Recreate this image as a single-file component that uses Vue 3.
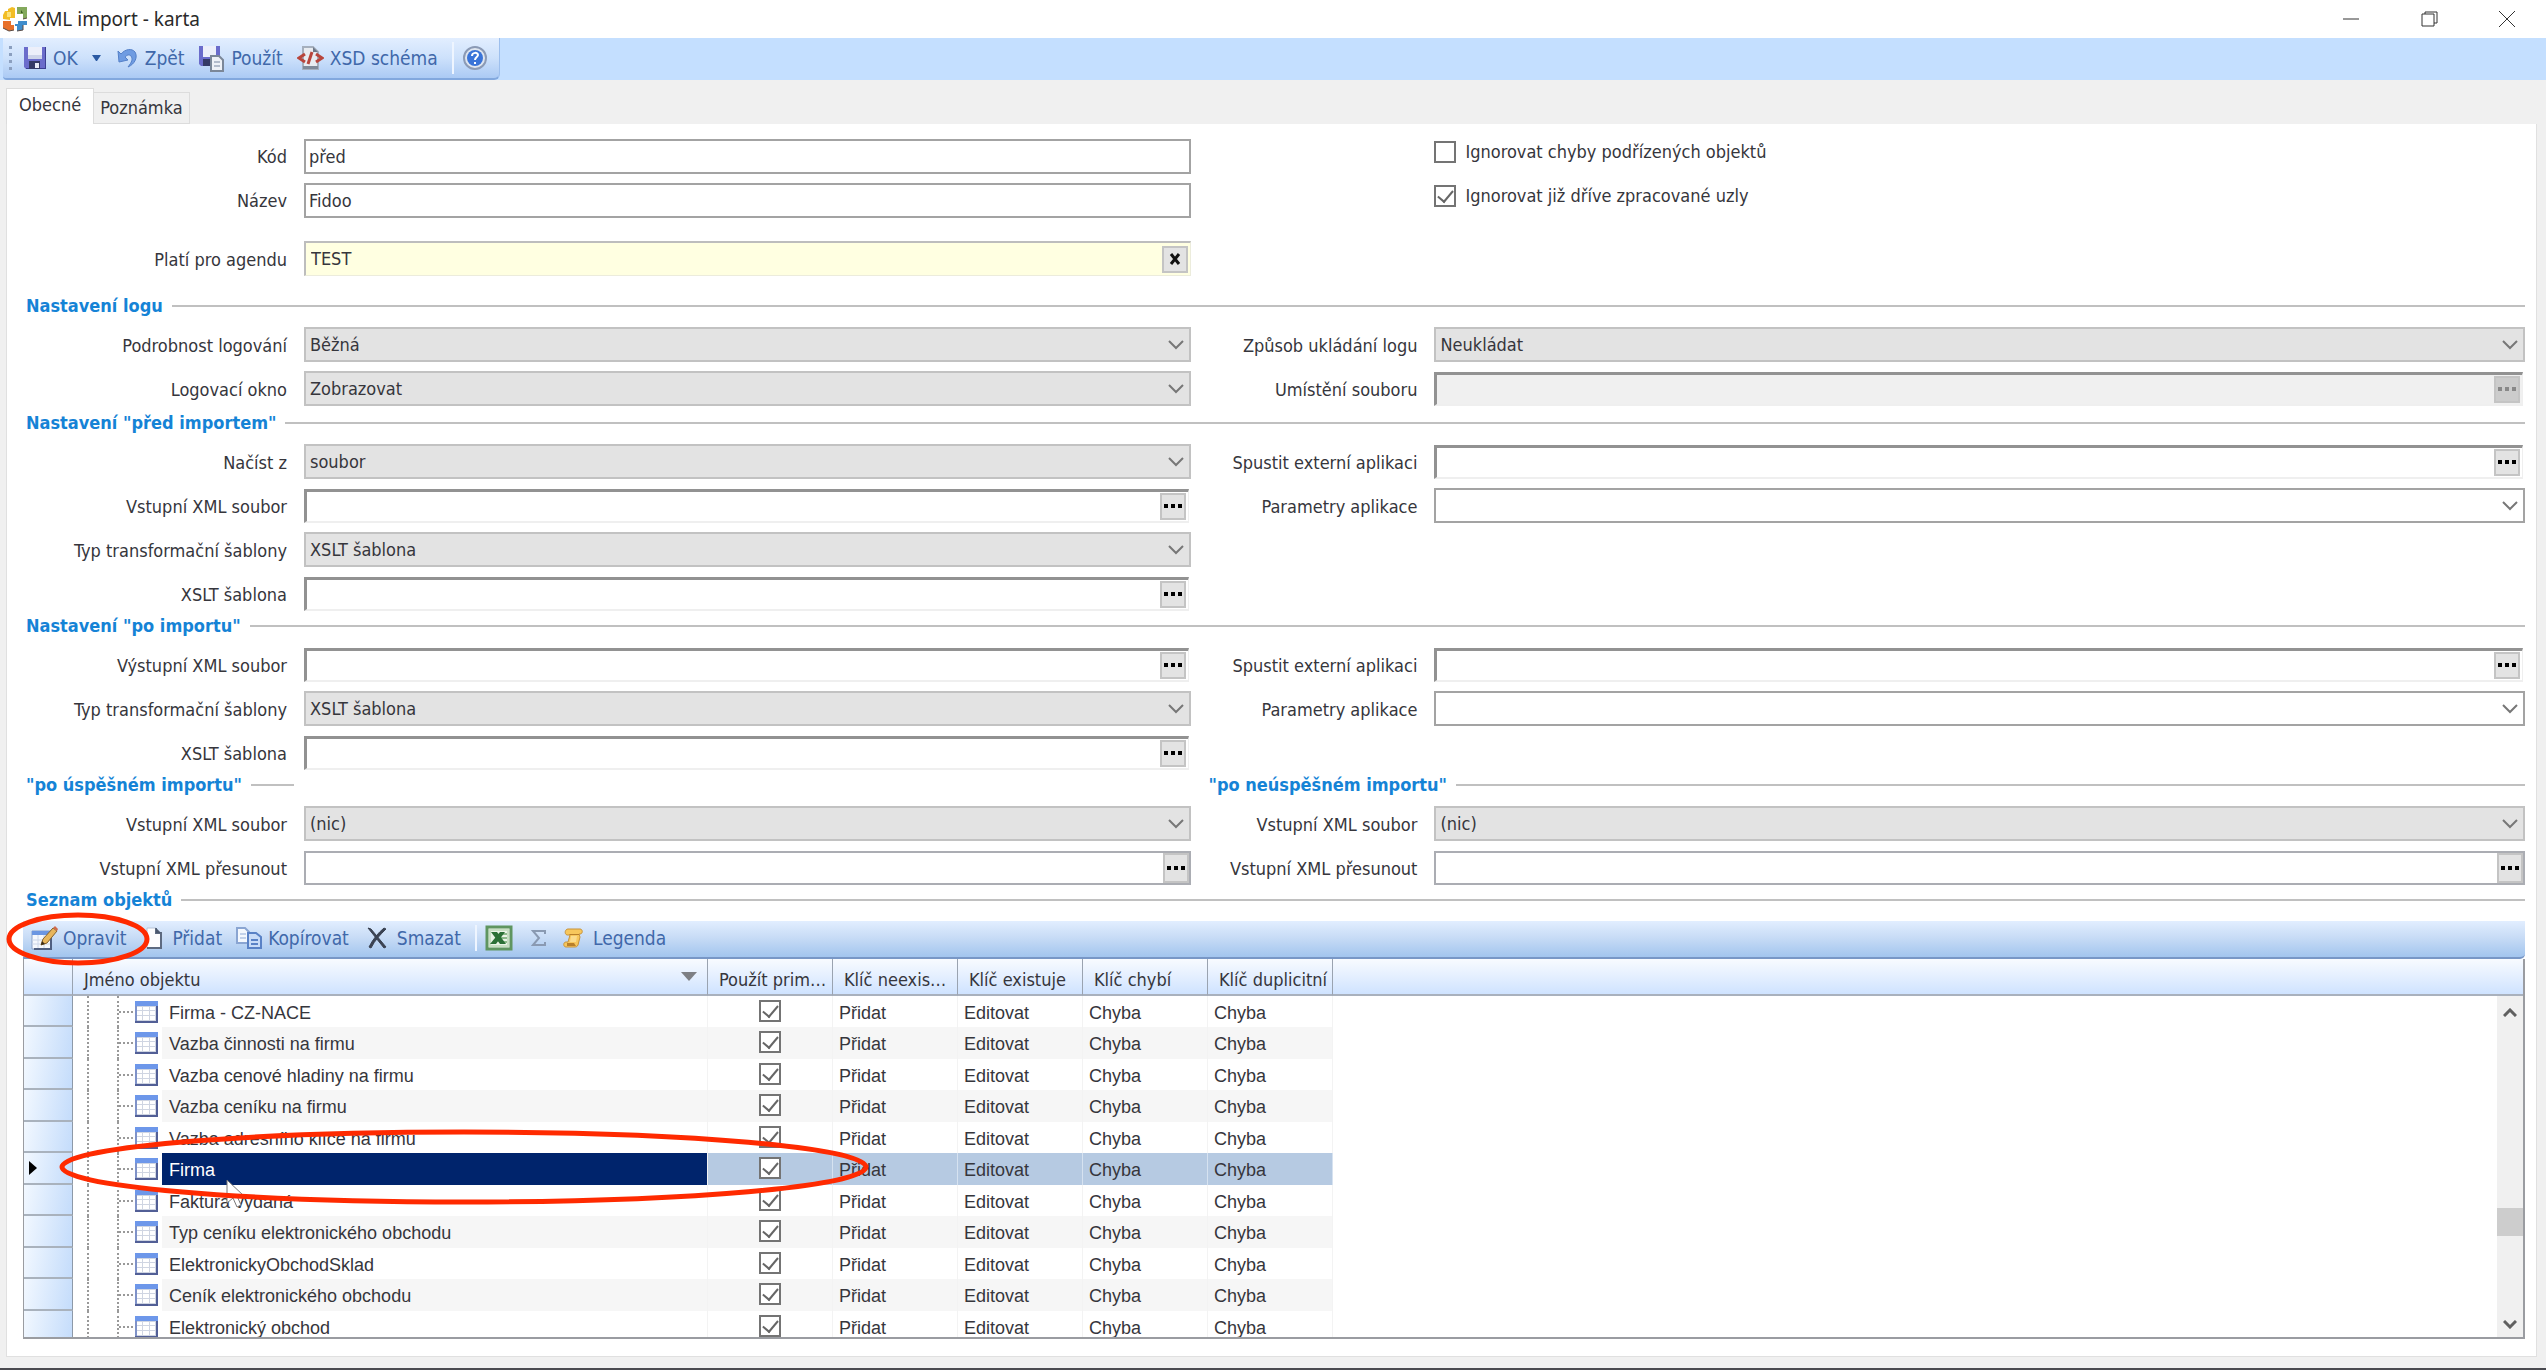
<script setup>
import { ref } from 'vue'

const kod = ref('před')
const nazev = ref('Fidoo')
const agenda = ref('TEST')
const ignoreChildren = ref(false)
const ignoreProcessed = ref(true)

const logRows = [
  [
    { id: 'log-detail', label: 'Podrobnost logování', kind: 'select', value: 'Běžná' },
    { id: 'log-save', label: 'Způsob ukládání logu', kind: 'select', value: 'Neukládat' },
  ],
  [
    { id: 'log-window', label: 'Logovací okno', kind: 'select', value: 'Zobrazovat' },
    { id: 'log-path', label: 'Umístění souboru', kind: 'browse', disabled: true },
  ],
]
const beforeRows = [
  [
    { id: 'load-from', label: 'Načíst z', kind: 'select', value: 'soubor' },
    { id: 'pre-app', label: 'Spustit externí aplikaci', kind: 'browse' },
  ],
  [
    { id: 'in-xml', label: 'Vstupní XML soubor', kind: 'browse' },
    { id: 'pre-params', label: 'Parametry aplikace', kind: 'combo', value: '' },
  ],
  [{ id: 'pre-type', label: 'Typ transformační šablony', kind: 'select', value: 'XSLT šablona' }],
  [{ id: 'pre-xslt', label: 'XSLT šablona', kind: 'browse' }],
]
const afterRows = [
  [
    { id: 'out-xml', label: 'Výstupní XML soubor', kind: 'browse' },
    { id: 'post-app', label: 'Spustit externí aplikaci', kind: 'browse' },
  ],
  [
    { id: 'post-type', label: 'Typ transformační šablony', kind: 'select', value: 'XSLT šablona' },
    { id: 'post-params', label: 'Parametry aplikace', kind: 'combo', value: '' },
  ],
  [{ id: 'post-xslt', label: 'XSLT šablona', kind: 'browse' }],
]
const resultRows = [
  [
    { id: 'ok-file', label: 'Vstupní XML soubor', kind: 'select', value: '(nic)' },
    { id: 'err-file', label: 'Vstupní XML soubor', kind: 'select', value: '(nic)' },
  ],
  [
    { id: 'ok-move', label: 'Vstupní XML přesunout', kind: 'path' },
    { id: 'err-move', label: 'Vstupní XML přesunout', kind: 'path' },
  ],
]
const sections = [
  { titles: ['Nastavení logu'], rows: logRows, cls: 'after-gap' },
  { titles: ['Nastavení "před importem"'], rows: beforeRows, cls: 'spaced' },
  { titles: ['Nastavení "po importu"'], rows: afterRows, cls: '' },
  { titles: ['"po úspěšném importu"', '"po neúspěšném importu"'], rows: resultRows, cls: '' },
]

const columns = ['Použít prim…', 'Klíč neexis…', 'Klíč existuje', 'Klíč chybí', 'Klíč duplicitní']
const objects = ref(
  [
    'Firma - CZ-NACE',
    'Vazba činnosti na firmu',
    'Vazba cenové hladiny na firmu',
    'Vazba ceníku na firmu',
    'Vazba adresního klíče na firmu',
    'Firma',
    'Faktura vydaná',
    'Typ ceníku elektronického obchodu',
    'ElektronickyObchodSklad',
    'Ceník elektronického obchodu',
    'Elektronický obchod',
  ].map((name) => ({ name, primary: true, values: ['Přidat', 'Editovat', 'Chyba', 'Chyba'] }))
)
const selected = ref(5)
</script>

<template>
  <div class="window">
    <header class="titlebar">
      <svg class="logo" width="26" height="26" viewBox="0 0 26 26" aria-hidden="true">
        <path d="M3 5h3V3l4-2 3 1v10H8v2L1 13V9z" fill="#f2bd25" />
        <path d="M5 6h4v5H5z" fill="#fbe27a" />
        <path d="M15 1h10v11l-4 1V8h-6z" fill="#84a95c" />
        <path d="M19 4l2 3h-2z" fill="#3c5a25" />
        <path d="M1 15h8v4h3v5l-5 1-6-3z" fill="#e8702a" />
        <path d="M16 15h9v4h-4v5l-6 1v-5h-2v-2h3z" fill="#3f8dcc" />
        <path d="M1 22l6 3 5-1M15 25l6-1v-5M21 13l4-1" fill="none" stroke="#5a4a44" />
      </svg>
      <h1>XML import - karta</h1>
      <div class="win-buttons">
        <button type="button" aria-label="Minimalizovat">
          <svg width="18" height="18" viewBox="0 0 18 18"><path d="M1 9h16" /></svg>
        </button>
        <button type="button" aria-label="Obnovit">
          <svg width="18" height="18" viewBox="0 0 18 18"><path d="M2 4h12v12H2zM5 4V2h12v11h-3" /></svg>
        </button>
        <button type="button" aria-label="Zavřít">
          <svg width="18" height="18" viewBox="0 0 18 18"><path d="M1 1l16 16M17 1L1 17" /></svg>
        </button>
      </div>
    </header>

    <div class="ribbon">
      <div class="toolbar" role="toolbar">
        <span class="grip"></span>
        <button type="button" class="tool t-ok">
          <svg width="24" height="24" viewBox="0 0 24 24">
            <path d="M1 1h22v22H3l-2-2z" fill="#6a6ccb" />
            <path d="M22 1h1v22H3v-1h19z" fill="#3b3f92" />
            <path d="M5 1h14v12H5z" fill="#eceffa" />
            <path d="M5 9h14v4H5z" fill="#cdd4ea" />
            <path d="M6 15h11v8H6z" fill="#343a66" />
            <path d="M12 17h4v5h-4z" fill="#e8ecf8" />
          </svg>
          <span>OK</span>
        </button>
        <button type="button" class="tool t-more" aria-label="Další možnosti">
          <svg width="9" height="6" viewBox="0 0 9 6"><path d="M0 0h9L5 6H4z" fill="#2b5aa3" /></svg>
        </button>
        <button type="button" class="tool t-back">
          <svg width="20" height="20" viewBox="0 0 20 20">
            <path d="M1 3l3 3C8 1 15 0 18 4c3 5 0 12-7 15 4-5 5-8 3-11-2-2-4-1-6 1l3 3-9 2z" fill="#6f9ce2" stroke="#5480c8" />
          </svg>
          <span>Zpět</span>
        </button>
        <button type="button" class="tool t-apply">
          <svg width="27" height="27" viewBox="0 0 27 27">
            <path d="M1 1h21v20H3l-2-2z" fill="#6a6ccb" />
            <path d="M5 1h13v11H5z" fill="#eceffa" />
            <path d="M5 14h8v7H5z" fill="#343a66" />
            <path d="M13 11h8l4 4v11H13z" fill="#eef1f6" stroke="#7b8798" stroke-width="2" />
            <path d="M16 17h6M16 21h6" stroke="#b3bccb" stroke-width="2" />
          </svg>
          <span>Použít</span>
        </button>
        <button type="button" class="tool t-xsd">
          <svg width="27" height="24" viewBox="0 0 27 24">
            <path d="M6 1h10l5 5v17H6z" fill="#e8ecf1" stroke="#a5afbd" stroke-width="2" />
            <path d="M6 20h15v3H6z" fill="#7f8a99" />
            <path d="M16 1v5h5z" fill="#6d7888" />
            <path d="M8 8l-6 4 6 4M19 8l6 4-6 4M15 6l-4 12" fill="none" stroke="#b8463c" stroke-width="3" />
          </svg>
          <span>XSD schéma</span>
        </button>
        <span class="divider"></span>
        <button type="button" class="tool t-help" aria-label="Nápověda">
          <svg width="26" height="26" viewBox="0 0 26 26">
            <circle cx="13" cy="13" r="11" fill="#dfe6f0" stroke="#8b9ab5" stroke-width="2" />
            <circle cx="13" cy="13" r="8" fill="#3a74d8" />
            <path d="M10 11c0-4 6-4 6-1 0 2-3 2-3 5M13 17v2" fill="none" stroke="#fff" stroke-width="2" />
          </svg>
        </button>
      </div>
    </div>

    <div class="tabs" role="tablist">
      <button type="button" role="tab" class="tab active" aria-selected="true">Obecné</button>
      <button type="button" role="tab" class="tab" aria-selected="false">Poznámka</button>
    </div>

    <main class="panel">
      <form class="form" @submit.prevent>
        <div class="row">
          <label for="kod">Kód</label>
          <input id="kod" v-model="kod" class="text" type="text" />
          <label class="check wide">
            <input v-model="ignoreChildren" type="checkbox" class="box" />
            <span>Ignorovat chyby podřízených objektů</span>
          </label>
        </div>
        <div class="row">
          <label for="nazev">Název</label>
          <input id="nazev" v-model="nazev" class="text" type="text" />
          <label class="check wide">
            <input v-model="ignoreProcessed" type="checkbox" class="box" />
            <span>Ignorovat již dříve zpracované uzly</span>
          </label>
        </div>
        <div class="row after-gap">
          <label for="agenda">Platí pro agendu</label>
          <div class="lookup">
            <input id="agenda" v-model="agenda" type="text" />
            <button type="button" aria-label="Vymazat">
              <svg width="12" height="12" viewBox="0 0 12 12">
                <path d="M2 1l8 10M10 1L2 11" stroke="#111" stroke-width="3" />
              </svg>
            </button>
          </div>
        </div>

        <section v-for="s in sections" :key="s.titles[0]" :class="s.cls">
          <div class="heading" :class="{ split: s.titles.length > 1 }">
            <h2 v-for="t in s.titles" :key="t">{{ t }}</h2>
          </div>
          <div v-for="(row, i) in s.rows" :key="i" class="row">
            <template v-for="f in row" :key="f.id">
              <label :for="f.id">{{ f.label }}</label>
              <div v-if="f.kind === 'select' || f.kind === 'combo'" class="drop" :class="f.kind">
                <select :id="f.id"><option>{{ f.value }}</option></select>
                <svg width="16" height="10" viewBox="0 0 16 10" aria-hidden="true">
                  <path d="M1 1l7 7 7-7" fill="none" stroke="#777" stroke-width="2" />
                </svg>
              </div>
              <div v-else class="file" :class="[f.kind, { off: f.disabled }]">
                <input :id="f.id" type="text" :disabled="f.disabled" />
                <button type="button" :disabled="f.disabled" aria-label="Procházet">
                  <svg width="18" height="4" viewBox="0 0 18 4"><path d="M0 0h4v4H0zM7 0h4v4H7zM14 0h4v4h-4z" /></svg>
                </button>
              </div>
            </template>
          </div>
        </section>

        <div class="heading"><h2>Seznam objektů</h2></div>
      </form>

      <div class="list">
        <div class="list-bar" role="toolbar">
          <button type="button" class="tool l-edit">
            <svg width="28" height="26" viewBox="0 0 28 26">
              <path d="M1 6h19v18H1z" fill="#f5f8fd" stroke="#8aa0c6" />
              <path d="M1 6h19v4H1z" fill="#6b96e2" />
              <path d="M1 15h19M1 19h19M7 10v14M13 10v14" stroke="#ccd6e8" />
              <path d="M3 24h17V13" fill="none" stroke="#4f5f80" stroke-width="2" />
              <path d="M10 20l2-6L22 3l4 3-10 12z" fill="#e8b65c" stroke="#86622c" />
              <path d="M10 20l1-4 3 3z" fill="#3a2c18" />
              <path d="M22 3l4 3 1-2-3-3z" fill="#cf6a4e" />
            </svg>
            <span>Opravit</span>
          </button>
          <button type="button" class="tool l-add">
            <svg width="16" height="22" viewBox="0 0 16 22">
              <path d="M1 1h9l5 5v15H1z" fill="#fdfdfe" stroke="#b9c4d6" />
              <path d="M10 1v5h5v15H1" fill="none" stroke="#5d6a80" stroke-width="2" />
              <path d="M10 1l5 5h-5z" fill="#4b586e" />
            </svg>
            <span>Přidat</span>
          </button>
          <button type="button" class="tool l-copy">
            <svg width="26" height="22" viewBox="0 0 26 22">
              <path d="M1 1h8l4 4v11H1z" fill="#f4f8fe" stroke="#8aa5d2" stroke-width="2" />
              <path d="M4 7h6M4 11h6" stroke="#c3d2ea" stroke-width="2" />
              <path d="M12 6h8l5 4v11H12z" fill="#c9dcf8" stroke="#5a82c6" stroke-width="2" />
              <path d="M15 13h7M15 17h7" stroke="#5a82c6" stroke-width="2" />
            </svg>
            <span>Kopírovat</span>
          </button>
          <button type="button" class="tool l-del">
            <svg width="20" height="22" viewBox="0 0 20 22">
              <path d="M1 1l3 1 15 18-2 1zM17 1l2 1C13 8 8 13 4 21l-2-1C6 12 11 6 17 1z" fill="#3a4252" stroke="#3a4252" />
            </svg>
            <span>Smazat</span>
          </button>
          <span class="divider"></span>
          <button type="button" class="tool l-excel" aria-label="Excel">
            <svg width="28" height="26" viewBox="0 0 28 26">
              <path d="M2 2h24v22H2z" fill="#eaf3e6" stroke="#5f9560" stroke-width="3" />
              <path d="M5 5h18v16H5z" fill="none" stroke="#c7dec2" stroke-width="2" />
              <path d="M15 9h7M15 13h7M15 17h7" stroke="#8dba8a" stroke-width="2" />
              <path d="M6 7h6l9 12h-6z" fill="#2c7036" />
              <path d="M20 7h-5L5 19h6z" fill="#2c7036" />
            </svg>
          </button>
          <button type="button" class="tool l-sum" aria-label="Součet">
            <svg width="16" height="18" viewBox="0 0 16 18">
              <path d="M14 5V2H2l6 7-6 7h12v-3" fill="none" stroke="#8a9ab2" stroke-width="2" />
            </svg>
          </button>
          <button type="button" class="tool l-legend">
            <svg width="20" height="20" viewBox="0 0 20 20">
              <path d="M5 1h12c3 0 3 5 0 5h-1l1 3-2 8c-1 2-2 2-4 2H3c-3 0-3-5 0-5h2l2-7H4C1 6 2 1 5 1z" fill="#f7c75c" stroke="#c8933a" />
              <path d="M6 6h10v1H7zM4 15h7l2 3H4z" fill="#b87f2a" />
              <path d="M8 8h6l-1 6H7z" fill="#fbdc8c" />
            </svg>
            <span>Legenda</span>
          </button>
        </div>

        <div class="grid">
          <table>
            <colgroup>
              <col class="c-mark" />
              <col class="c-name" />
              <col v-for="c in columns" :key="c" class="c-val" />
              <col />
            </colgroup>
            <thead>
              <tr>
                <th></th>
                <th>
                  <div class="sorted">
                    <span>Jméno objektu</span>
                    <svg width="16" height="9" viewBox="0 0 16 9"><path d="M0 0h16L8 9z" fill="#7d7f84" /></svg>
                  </div>
                </th>
                <th v-for="c in columns" :key="c">{{ c }}</th>
                <th></th>
              </tr>
            </thead>
            <tbody>
              <tr v-for="(o, i) in objects" :key="o.name" :class="{ current: i === selected }" @click="selected = i">
                <td class="mark">
                  <svg v-if="i === selected" width="8" height="14" viewBox="0 0 8 14"><path d="M0 0l8 7-8 7z" /></svg>
                </td>
                <td class="name">
                  <div class="node">
                    <span class="rail"></span>
                    <span class="rail branch"></span>
                    <svg width="23" height="22" viewBox="0 0 23 22" aria-hidden="true">
                      <path d="M0 0h23v22H0z" fill="#7f92c8" />
                      <path d="M21 3h2v19H0v-2h21z" fill="#525f96" />
                      <path d="M0 0h23v5H0z" fill="#6d97ea" />
                      <path d="M2 5h19v15H2z" fill="#cfd5e2" />
                      <path d="M2 6h5v3H2zM8 6h6v3H8zM15 6h5v3h-5zM2 10h5v4H2zM8 10h6v4H8zM15 10h5v4h-5zM2 15h5v4H2zM8 15h6v4H8zM15 15h5v4h-5z" fill="#fff" />
                    </svg>
                    <span class="caption">{{ o.name }}</span>
                  </div>
                </td>
                <td class="tick"><input v-model="o.primary" type="checkbox" class="box" :aria-label="o.name" /></td>
                <td v-for="(v, k) in o.values" :key="k">{{ v }}</td>
                <td class="rest"></td>
              </tr>
            </tbody>
          </table>
          <div class="scroll">
            <svg width="14" height="9" viewBox="0 0 14 9"><path d="M1 8l6-6 6 6" /></svg>
            <span class="above"></span>
            <span class="thumb"></span>
            <span class="below"></span>
            <svg width="14" height="9" viewBox="0 0 14 9"><path d="M1 1l6 6 6-6" /></svg>
          </div>
        </div>

        <svg class="marks" width="880" height="310" viewBox="0 0 880 310" aria-hidden="true">
          <path d="M224 270v23l6-5 4 9 4-2-4-9h7z" fill="#fff" stroke="#777" />
          <g fill="none" stroke="#ff2a00">
            <ellipse cx="75" cy="29" rx="69" ry="24" stroke-width="5" />
            <ellipse cx="461" cy="257" rx="402" ry="35" stroke-width="5" />
          </g>
        </svg>
      </div>
    </main>
  </div>
</template>

<style>
html,
body {
  margin: 0;
  background: #f0f0f0;
}
</style>

<style scoped>
* {
  box-sizing: border-box;
}
.window {
  display: flex;
  flex-direction: column;
  height: 100vh;
  min-width: 1400px;
  min-height: 1100px;
  padding-bottom: 11px;
  border-bottom: 2px solid #4a4a50;
  background: #f0f0f0;
  color: #36363c;
  font: 18px/22px 'DejaVu Sans Condensed', 'Liberation Sans', sans-serif;
}
button,
input,
select {
  margin: 0;
  padding: 0;
  border: 0;
  background: none;
  color: inherit;
  font: inherit;
}
h1,
h2 {
  margin: 0;
}
svg {
  display: block;
  flex: none;
}

.titlebar {
  display: flex;
  align-items: center;
  flex: none;
  height: 38px;
  padding-left: 2px;
  background: #fff;
}
.titlebar h1 {
  flex: 1;
  padding-left: 6px;
  color: #2a2a2a;
  font: 19px/26px 'Noto Sans', sans-serif;
}
.win-buttons {
  display: flex;
}
.win-buttons button {
  display: grid;
  place-items: center;
  width: 78px;
  height: 36px;
}
.win-buttons path {
  fill: none;
  stroke: #333;
  stroke-width: 1;
}

.ribbon {
  flex: none;
  height: 42px;
  padding-left: 3px;
  background: #c4dfff;
}
.toolbar {
  display: flex;
  align-items: center;
  width: 497px;
  height: 42px;
  padding-left: 6px;
  border-right: 1px solid #9dbfed;
  border-bottom: 2px solid #82a8de;
  border-radius: 0 0 6px 4px;
  background: linear-gradient(#e2eeff, #cde1fb 50%, #abcaf4);
}
.grip {
  width: 3px;
  height: 24px;
  margin-right: 11px;
  background: repeating-linear-gradient(#8b9fbf 0 3px, transparent 3px 7px);
}
.tool {
  display: flex;
  align-items: center;
  gap: 6px;
  color: #4068aa;
  font-size: 19px;
  white-space: nowrap;
}
.t-ok,
.t-back,
.t-apply {
  margin-right: 14px;
}
.t-more {
  margin-right: 16px;
}
.t-back {
  gap: 8px;
}
.divider {
  width: 2px;
  height: 32px;
  margin: 0 8px 0 14px;
  background: #eef5ff;
}

.tabs {
  display: flex;
  align-items: flex-end;
  flex: none;
  height: 44px;
  padding-left: 6px;
}
.tab {
  height: 32px;
  padding: 0 6px;
  border: 1px solid #dcdcdc;
  border-left: 0;
  background: #f0f0f0;
}
.tab.active {
  height: 36px;
  padding: 0 12px 4px;
  border: 1px solid #dcdcdc;
  border-bottom: 0;
  background: #fff;
}

.panel {
  display: flex;
  flex: 1;
  flex-direction: column;
  min-height: 0;
  margin: 0 9px 0 6px;
  padding: 14px 11px 17px 16px;
  border: 1px solid #e0e0e0;
  border-top: 0;
  background: #fff;
}
.form {
  padding-left: 3px;
}
.row {
  display: grid;
  grid-template-columns: 261px 887fr 209px 1090fr;
  column-gap: 17px;
  align-items: center;
  height: 35px;
}
.row + .row {
  margin-top: 9px;
}
.row.after-gap {
  margin-top: 24px;
}
section.after-gap {
  padding-top: 15px;
}
section.spaced {
  padding-top: 2px;
}
.row > label {
  padding-top: 2px;
  text-align: right;
  white-space: nowrap;
}
.row > .check {
  display: flex;
  align-items: center;
  gap: 9px;
  grid-column: 4;
  height: 28px;
  margin-bottom: 8px;
  padding: 0;
}
.box {
  display: inline-grid;
  place-items: center;
  width: 22px;
  height: 22px;
  border: 2px solid #747474;
  background: #fff;
  appearance: none;
}
.box:checked::before {
  width: 7px;
  height: 13px;
  margin-bottom: 4px;
  border: solid #666;
  border-width: 0 2px 2px 0;
  content: '';
  transform: rotate(40deg);
}
.text {
  width: 100%;
  height: 35px;
  padding-left: 3px;
  border: 2px solid #a3a3a3;
}
.lookup {
  display: flex;
  align-items: center;
  height: 35px;
  padding-right: 2px;
  border: solid #ececdc;
  border-width: 2px 1px 1px 2px;
  border-top-color: #bdbdbd;
  border-left-color: #bdbdbd;
  background: #ffffe1;
}
.lookup input,
.file input {
  flex: 1;
  min-width: 0;
  padding-left: 5px;
}
.lookup button,
.file button {
  display: grid;
  place-items: center;
  width: 26px;
  height: 27px;
  border: 2px solid #c4c4c4;
  background: #e3e3e3;
}
.drop {
  position: relative;
  height: 35px;
}
.drop select {
  width: 100%;
  height: 35px;
  padding-left: 4px;
  border: 2px solid #c2c2c2;
  border-radius: 0;
  background: #e3e3e3;
  appearance: none;
}
.drop.combo select {
  border-color: #a3a3a3;
  background: #fff;
}
.drop svg {
  position: absolute;
  top: 13px;
  right: 7px;
  pointer-events: none;
}
.file {
  display: flex;
  align-items: center;
  height: 34px;
}
.file.browse {
  margin-right: 2px;
  padding-right: 2px;
  border: solid #efefef;
  border-width: 3px 1px 2px 3px;
  border-top-color: #929292;
  border-left-color: #929292;
}
.file.path {
  border: 2px solid #abadb3;
}
.file.path button {
  align-self: stretch;
  height: auto;
}
.file.off {
  background: #f0f0f0;
}
.file.off button {
  background: #ccc;
}
.file.off path {
  fill: #888;
}
.heading {
  display: flex;
  gap: 15px;
  height: 22px;
  margin: 4px 0 10px;
}
.heading.split {
  display: grid;
  grid-template-columns: 261px 887fr 209px 1090fr;
  column-gap: 17px;
}
.heading h2 {
  display: flex;
  align-items: center;
  flex: 1;
  gap: 9px;
  color: #1583d6;
  font-size: 18px;
  line-height: 22px;
  white-space: nowrap;
}
.heading h2::after {
  flex: 1;
  height: 2px;
  background: #c0c0c0;
  content: '';
}
.heading.split h2:first-child {
  margin-right: -7px;
}
.heading.split h2:last-child {
  grid-column: 3 / 5;
}

.list {
  position: relative;
  display: flex;
  flex: 1;
  flex-direction: column;
  min-height: 0;
}
.list-bar {
  display: flex;
  align-items: center;
  flex: none;
  height: 38px;
  padding: 0 0 2px 8px;
  border-bottom: 2px solid #7897c6;
  border-radius: 0 0 5px 0;
  background: linear-gradient(#e2eeff, #c8dcf6 45%, #a2c5ee);
}
.l-edit {
  gap: 4px;
  margin-right: 20px;
}
.l-add {
  gap: 10px;
  margin-right: 14px;
}
.l-copy {
  margin-right: 18px;
}
.l-del {
  gap: 10px;
}
.list-bar .divider {
  height: 26px;
}
.l-excel {
  margin-right: 18px;
}
.l-sum {
  margin-right: 16px;
}
.l-legend {
  gap: 10px;
}
.grid {
  position: relative;
  flex: 1;
  min-height: 0;
  overflow: hidden;
  border: 1px solid #9a9ca1;
  border-width: 0 2px 2px 1px;
}
table {
  width: 100%;
  border-collapse: separate;
  border-spacing: 0;
  table-layout: fixed;
}
.c-mark {
  width: 49px;
}
.c-name {
  width: 635px;
}
.c-val {
  width: 125px;
}
th {
  height: 37px;
  padding: 6px 0 0 11px;
  border-right: 1px solid #9aa3b0;
  border-bottom: 2px solid #a9b1bd;
  background: linear-gradient(#f8fbff, #e4efff 50%, #cfe3ff);
  font-weight: 400;
  line-height: 22px;
  text-align: left;
  white-space: nowrap;
}
th:last-child {
  border-right: 0;
}
.sorted {
  display: flex;
  align-items: center;
  justify-content: space-between;
  padding-right: 10px;
}
.sorted svg {
  margin-bottom: 6px;
}
td {
  height: 31px;
  padding: 2px 0 0 6px;
  border-right: 1px solid #f3f3f3;
  font: 18px/22px 'Liberation Sans', sans-serif;
  white-space: nowrap;
}
tr:nth-child(even) td {
  height: 32px;
  background: #f6f6f6;
}
tbody .mark,
tbody tr:nth-child(even) .mark {
  padding: 0 0 0 5px;
  border-right: 1px solid #8d99a8;
  border-bottom: 2px solid #a9b2bd;
  background: linear-gradient(100deg, #f2f8ff, #c4dcfb);
}
tbody .rest,
tbody tr:nth-child(even) .rest {
  border: 0;
  background: #fff;
}
tbody .name {
  padding: 0;
}
.node {
  display: flex;
  align-items: center;
  height: 31px;
  background: #fff;
}
tr:nth-child(even) .node {
  height: 32px;
}
.rail {
  align-self: stretch;
  width: 30px;
  margin-left: 14px;
  border-left: 2px dotted #999;
}
.rail.branch {
  width: 18px;
  margin-left: 0;
  background: repeating-linear-gradient(90deg, #999 0 2px, transparent 2px 4px) 0 50% / 14px 2px no-repeat;
}
.caption {
  flex: 1;
  align-self: stretch;
  margin-left: 4px;
  padding: 6px 0 0 7px;
}
tr:nth-child(even) .caption {
  background: #f6f6f6;
}
tbody .tick {
  padding: 0 0 2px;
  text-align: center;
  line-height: 0;
}
tbody .current td:not(.mark, .rest, .name) {
  border-right-color: #d6e2f0;
  background: #b6cae2;
}
tbody tr.current .caption {
  background: #00246c;
  color: #fff;
}
.scroll {
  position: absolute;
  top: 37px;
  right: 0;
  bottom: 0;
  display: flex;
  flex-direction: column;
  align-items: center;
  width: 26px;
  padding: 12px 0 8px;
  background: #f0f0f0;
}
.scroll path {
  fill: none;
  stroke: #606060;
  stroke-width: 3;
}
.above {
  flex: 190;
}
.thumb {
  align-self: stretch;
  height: 28px;
  background: #cdcdcd;
}
.below {
  flex: 83;
}
.marks {
  position: absolute;
  top: -11px;
  left: -20px;
  overflow: visible;
  pointer-events: none;
}
</style>
